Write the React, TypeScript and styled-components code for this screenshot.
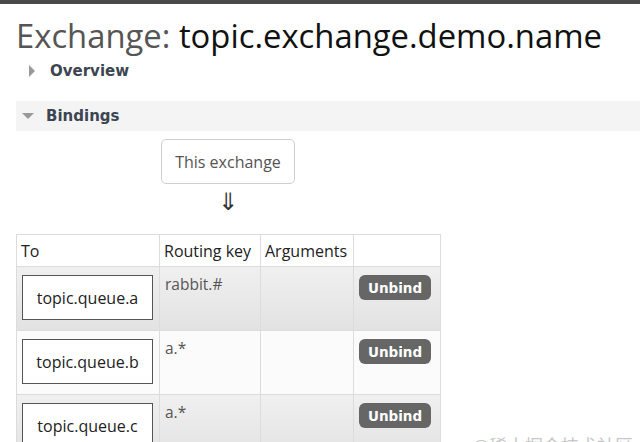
import React from 'react';
import styled, { createGlobalStyle } from 'styled-components';

const GlobalStyle = createGlobalStyle`
    html, body {
        margin: 0;
        padding: 0;
        background: #fff;
        overflow: hidden;
    }
    body {
        font-family: 'Open Sans', 'DejaVu Sans', sans-serif;
        color: #333;
    }
`;

const TopBar = styled.div`
    height: 4px;
    background-color: #4a4a4a;
`;

const Page = styled.div`
    position: relative;
    height: 438px;
    padding: 0 0 0 16px;
    overflow: hidden;
`;

const Title = styled.h1`
    margin: 12px 0 0 0;
    font-size: 32.8px;
    font-weight: 400;
    line-height: 40px;
    color: #111;
`;

const TitleLabel = styled.span`
    color: #555;
`;

const Section = styled.div<{ open?: boolean }>`
    display: flex;
    align-items: center;
    gap: 12px;
    height: 30px;
    padding-left: ${(props) => props.open ? "6px" : "10px"};
    background-color: ${(props) => props.open ? "#f4f4f4" : "transparent"};
    margin-top: ${(props) => props.open ? "15px" : "0"};
`;

const SectionName = styled.span`
    font-family: 'DejaVu Sans', sans-serif;
    font-size: 15px;
    font-weight: 700;
    color: #3c4552;
`;

const Flow = styled.div`
    display: flex;
    flex-direction: column;
    align-items: center;
    width: 424px;
`;

const ThisExchange = styled.div`
    box-sizing: border-box;
    margin-top: 8px;
    width: 134px;
    height: 45px;
    display: flex;
    align-items: center;
    justify-content: center;
    border: 1px solid #cfcfcf;
    border-radius: 5px;
    font-size: 16px;
    color: #555;
`;

const Arrow = styled.div`
    margin-top: 4px;
    font-family: 'DejaVu Sans', sans-serif;
    font-size: 24px;
    line-height: 28px;
    color: #333;
`;

const Table = styled.table`
    margin-top: 18px;
    width: 424px;
    table-layout: fixed;
    border-collapse: collapse;
    font-size: 16px;
`;

const Th = styled.th<{ w: number }>`
    box-sizing: border-box;
    width: ${(props) => props.w}px;
    height: 32px;
    padding: 0 4px;
    text-align: left;
    font-weight: 400;
    color: #222;
    border: 1px solid #dcdcdc;
    background: #fff;
`;

const Row = styled.tr<{ shaded?: boolean }>`
    height: 64px;
    background: ${(props) => props.shaded
        ? "linear-gradient(#f0f0f0, #e2e2e2)"
        : "#fbfbfb"};
`;

const Td = styled.td`
    vertical-align: top;
    padding: 6px 5px;
    border: 1px solid #dcdcdc;
    color: #555;
    font-size: 15.5px;
`;

const QueueBox = styled.div`
    box-sizing: border-box;
    width: 131px;
    height: 45px;
    margin-top: 2px;
    display: flex;
    align-items: center;
    justify-content: center;
    border: 1.5px solid #555;
    background: #fff;
    font-size: 16px;
    color: #222;
`;

const UnbindButton = styled.button`
    margin: 2px 0 0 0;
    padding: 0 9px;
    height: 25px;
    border: none;
    border-radius: 6px;
    background-color: #666;
    color: #fff;
    font-family: 'DejaVu Sans', sans-serif;
    font-size: 13.5px;
    font-weight: 700;
`;

const Watermark = styled.div`
    position: absolute;
    left: 472px;
    top: 428px;
    font-family: 'Noto Sans CJK SC', sans-serif;
    font-size: 18px;
    color: #c8c8c8;
    white-space: nowrap;
`;

const bindings = [
    { queue: "topic.queue.a", key: "rabbit.#" },
    { queue: "topic.queue.b", key: "a.*" },
    { queue: "topic.queue.c", key: "a.*" },
];

const Triangle = ({ down }: { down?: boolean }) => (
    <svg width="12" height="12" viewBox="0 0 12 12">
        {down
            ? <polygon points="0,3 12,3 6,9" fill="#999" />
            : <polygon points="3,0 9,6 3,12" fill="#999" />}
    </svg>
);

export default function App() {
    return (
        <>
            <GlobalStyle />
            <TopBar />
            <Page>
                <Title><TitleLabel>Exchange:</TitleLabel> topic.exchange.demo.name</Title>
                <Section>
                    <Triangle />
                    <SectionName>Overview</SectionName>
                </Section>
                <Section open>
                    <Triangle down />
                    <SectionName>Bindings</SectionName>
                </Section>
                <Flow>
                    <ThisExchange>This exchange</ThisExchange>
                    <Arrow>⇓</Arrow>
                </Flow>
                <Table>
                    <thead>
                        <tr>
                            <Th w={143}>To</Th>
                            <Th w={101}>Routing key</Th>
                            <Th w={93}>Arguments</Th>
                            <Th w={87}></Th>
                        </tr>
                    </thead>
                    <tbody>
                        {bindings.map((b, i) => (
                            <Row key={b.queue} shaded={i % 2 === 0}>
                                <Td><QueueBox>{b.queue}</QueueBox></Td>
                                <Td>{b.key}</Td>
                                <Td></Td>
                                <Td><UnbindButton>Unbind</UnbindButton></Td>
                            </Row>
                        ))}
                    </tbody>
                </Table>
                <Watermark>@稀土掘金技术社区</Watermark>
            </Page>
        </>
    );
}
